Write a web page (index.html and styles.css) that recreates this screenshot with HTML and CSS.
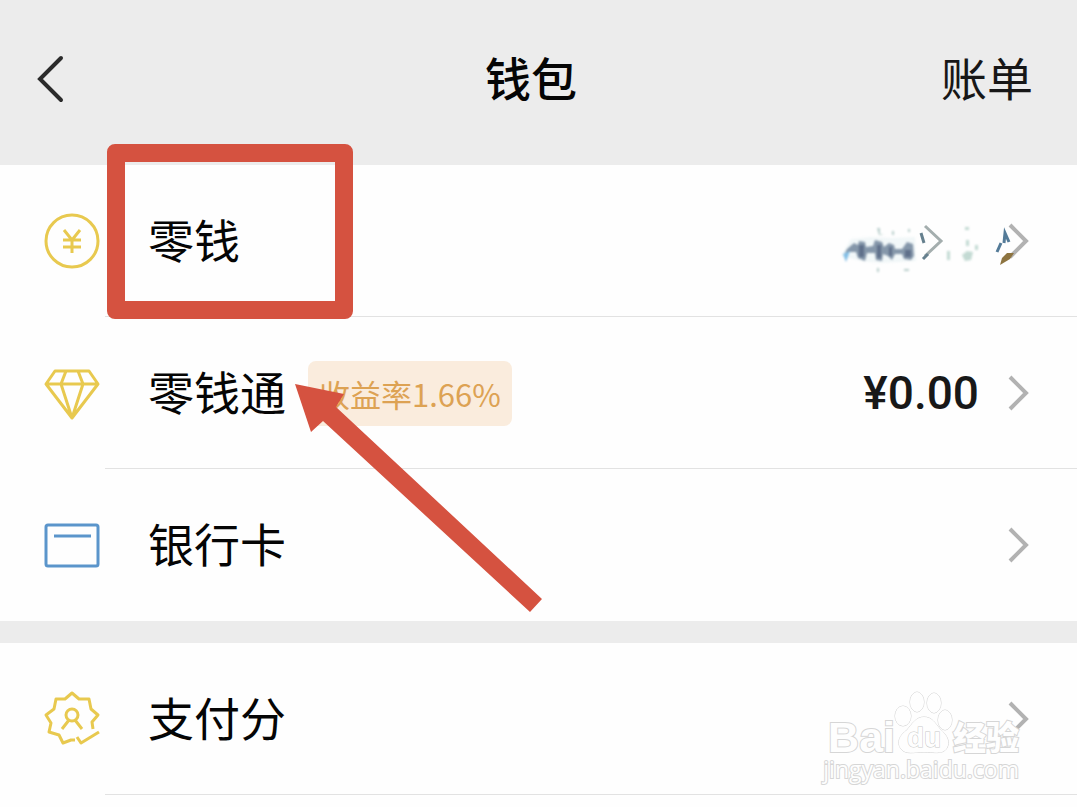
FILE: index.html
```html
<!DOCTYPE html>
<html lang="zh-CN">
<head>
  <meta charset="UTF-8">
  <meta name="viewport" content="width=device-width, initial-scale=1.0">
  <title>钱包</title>
  <link rel="stylesheet" href="styles.css">
</head>
<body>
  <header class="topbar">
    <button class="back" type="button" aria-label="返回">
      <svg width="28" height="48" viewBox="0 0 28 48"><path d="M24 3L3 24L24 45"/></svg>
    </button>
    <h1>钱包</h1>
    <a class="bill" href="#">账单</a>
  </header>

  <main>
    <nav class="group">
      <a class="row" href="#">
        <svg class="icon yellow" viewBox="0 0 56 56">
          <circle cx="28" cy="28" r="26"/>
          <path d="M20 17L28 27L36 17M28 27V40M19 27H37M19 34H37"/>
        </svg>
        <span class="row-body">
          <span class="label">零钱</span>
          <svg class="smudge" width="180" height="60" viewBox="0 0 180 60">
            <g class="haze">
              <path fill="#e6f1f4" d="M0 45L10 28L30 26L50 27L74 26L75 50L40 52L20 50Z" opacity=".5"/>
              <path fill="#8597aa" d="M3 44L6 38L13 32L17 34L18 30L24 31L25 36L32 35L34 29L41 31L43 36L48 32L53 34L54 38L61 38L66 31L72 33L73 45L70 49L63 48L61 43L54 43L51 49L47 45L42 43L41 50L35 49L34 42L26 42L24 50L17 47L15 41L9 41Z"/>
              <path fill="#5f708a" d="M18 34h5v12h-5zM36 34h4v13h-4zM48 36h3v9h-3zM64 39h6v7h-6z"/>
              <path fill="#83bfe6" d="M2 43L9 40L5 51Z"/>
              <path fill="#9dbcb8" d="M36 17h3v6l4 1h-5zM51 20h2v4h-2zM67 18h2v3h-2zM36 57h2v4h-2zM63 58h5v2h-5z" opacity=".7"/>
              <path fill="#c3dad3" d="M121 44l5-4l6 1l-2 8l-6 1zM125 29h3v6h-3zM124 16h4v3h-4zM106 40h3v9h-3zM134 34h3v5h-3z"/>
            </g>
            <g class="scratch">
              <path stroke="#a4aeae" d="M84 15L100 30L84 45"/>
              <path stroke="#66808e" d="M80 22L83 32M82 48L87 43"/>
              <path stroke="#547b98" d="M156 41L160 32M163 32L164 22L168 31"/>
            </g>
          </svg>
          <svg class="chevron" width="22" height="38" viewBox="0 0 22 38"><path d="M3 3L19 19L3 35"/><path class="tip" d="M-5 36L0 31L7 31L3 37L-7 43Z"/></svg>
        </span>
        <span class="mark-box"></span>
      </a>
      <a class="row" href="#">
        <svg class="icon yellow" viewBox="0 0 56 56">
          <path d="M11 6H45L54 19L28 53L2 19ZM2 19H54M22 6L17 19L28 53L39 19L34 6"/>
        </svg>
        <span class="row-body">
          <span class="label">零钱通</span>
          <span class="rate">收益率1.66%</span>
          <span class="amount">¥0.00</span>
          <svg class="chevron" width="22" height="38" viewBox="0 0 22 38"><path d="M3 3L19 19L3 35"/></svg>
        </span>
        <svg class="mark-arrow" width="250" height="230" viewBox="0 0 250 230">
          <path d="M0 0L49 10L41 23L247 215L235 228L28 37L16 48Z"/>
        </svg>
      </a>
      <a class="row" href="#">
        <svg class="icon blue" viewBox="0 0 56 56">
          <rect x="2" y="8" width="52" height="41" rx="2"/>
          <path d="M10 19H47"/>
        </svg>
        <span class="row-body">
          <span class="label">银行卡</span>
          <svg class="chevron" width="22" height="38" viewBox="0 0 22 38"><path d="M3 3L19 19L3 35"/></svg>
        </span>
      </a>
    </nav>

    <nav class="group">
      <a class="row" href="#">
        <svg class="icon yellow" viewBox="0 0 56 56">
          <path d="M31 49L27 49L19 52L15 44L5 41L7 32L2 24L10 18L12 8L21 8L28 2L35 8L45 8L47 18L54 24L48 31L49 38M55 41L37 52L33 46"/>
          <circle cx="28" cy="24" r="6"/>
          <path d="M18 38L25 29M38 38L31 29"/>
        </svg>
        <span class="row-body">
          <span class="label">支付分</span>
          <svg class="chevron" width="22" height="38" viewBox="0 0 22 38"><path d="M3 3L19 19L3 35"/></svg>
        </span>
        <span class="watermark">
          <span class="brand">
            <span class="bai">Bai</span>
            <svg width="58" height="64" viewBox="0 0 58 64">
              <ellipse cx="8" cy="25" rx="8" ry="10"/>
              <ellipse cx="22" cy="11" rx="7" ry="10"/>
              <ellipse cx="39" cy="12" rx="7" ry="10"/>
              <ellipse cx="50" cy="29" rx="7" ry="10"/>
              <path d="M29 26C37 26 40 32 45 38C53 45 55 51 52 57C48 64 38 61 29 61C19 61 11 64 6 58C1 51 5 44 12 39C17 33 21 26 29 26Z"/>
              <text x="29" y="56" text-anchor="middle">du</text>
            </svg>
            <span class="jingyan">经验</span>
          </span>
          <span class="site">jingyan.baidu.com</span>
        </span>
      </a>
    </nav>
  </main>
</body>
</html>
```

FILE: styles.css
```css
* {
  box-sizing: border-box;
}

body {
  margin: 0;
  background: #fefefe;
  color: #050505;
  font-family: "Noto Sans CJK SC", sans-serif;
  font-size: 46px;
}

a {
  color: inherit;
  text-decoration: none;
}

svg {
  display: block;
  flex: none;
  fill: none;
  overflow: visible;
}

/* top bar */
.topbar {
  display: flex;
  align-items: center;
  justify-content: space-between;
  padding: 45px 44px 52px 37px;
  background: #ececec;
}

.back {
  width: 84px;
  padding: 0;
  border: none;
  background: none;
  cursor: pointer;
}

.back path {
  stroke: #2b2b2b;
  stroke-width: 4;
  stroke-linecap: round;
}

h1 {
  margin: 0;
  font-size: 46px;
  font-weight: 500;
}

h1, .bill, .label {
  padding-bottom: 6px;
  line-height: 62px;
}

.bill {
  color: #171717;
}

/* list */
.group + .group {
  border-top: 22px solid #ececec;
}

.row {
  display: flex;
  align-items: center;
  position: relative;
  padding-left: 44px;
}

.icon {
  width: 56px;
  height: 56px;
  stroke-width: 3;
  stroke-linejoin: round;
}

.yellow {
  stroke: #e8c94f;
}

.blue {
  stroke: #5b95cb;
}

.row-body {
  flex: 1;
  display: flex;
  align-items: center;
  margin-left: 5px;
  padding: 42px 48px 41px 43px;
  border-bottom: 1px solid #e2e2e2;
}

.group:first-child .row:last-child .row-body {
  border-color: transparent;
}

.label {
  margin-right: 22px;
}

.rate {
  padding: 0 11px;
  border-radius: 8px;
  background: #faecdd;
  color: #dda253;
  font-size: 31px;
  line-height: 65px;
}

.amount {
  margin-left: auto;
  color: #181818;
  font-family: Roboto, sans-serif;
  font-weight: 500;
  line-height: 68px;
}

.chevron {
  margin-left: auto;
  stroke: #b2b2b2;
  stroke-width: 4;
}

.amount + .chevron {
  margin-left: 28px;
}

.tip {
  fill: #8d7440;
  stroke: none;
}

/* blurred-out balance */
.smudge {
  margin-left: auto;
}

.smudge + .chevron {
  margin-left: -14px;
}

.haze {
  filter: blur(1px);
}

.scratch {
  stroke-width: 3;
}

/* red highlight marks */
.mark-box {
  position: absolute;
  z-index: 1;
  top: -21px;
  left: 107px;
  width: 246px;
  height: 175px;
  border: 18px solid #d55240;
  border-radius: 8px;
}

.mark-arrow {
  position: absolute;
  z-index: 1;
  top: 67px;
  left: 295px;
  fill: #d55240;
}

/* site watermark */
.watermark {
  position: absolute;
  right: 58px;
  bottom: 12px;
  color: #fefefe;
  font-family: "Open Sans", "Noto Sans CJK SC", sans-serif;
  -webkit-text-stroke: 2px #d6d6d6;
  paint-order: stroke fill;
}

.brand {
  display: flex;
  align-items: flex-end;
  justify-content: flex-end;
  font-weight: 700;
}

.brand svg {
  fill: #fefefe;
  stroke: #d2d2d2;
}

.brand text {
  font-family: "Liberation Sans", sans-serif;
  font-size: 28px;
  stroke: #c8c8c8;
}

.bai {
  font-family: "Liberation Sans", sans-serif;
  font-size: 43px;
  line-height: 36px;
}

.jingyan {
  font-size: 33px;
  font-weight: 900;
  line-height: 34px;
}

.site {
  display: block;
  font-size: 23px;
  line-height: 28px;
}
```
